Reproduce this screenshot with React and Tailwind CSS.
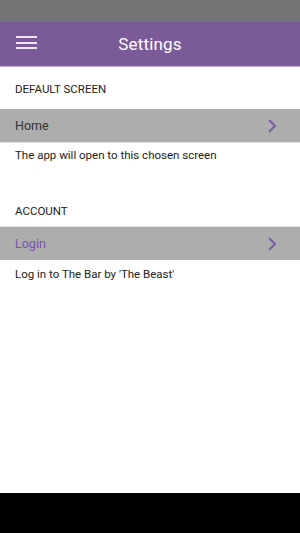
import React from 'react';

const Chevron = () => (
  <svg width="10" height="14" viewBox="0 0 10 14" className="shrink-0">
    <polyline points="2,1 8,7 2,13" fill="none" stroke="#7d5ba6" strokeWidth="2" />
  </svg>
);

const Row = ({ label, purple }) => (
  <div className="h-[33px] bg-[#adadad] flex items-center justify-between pl-[15px] pr-[23px]">
    <span className={`text-[12.5px] pt-[2px] ${purple ? 'text-[#7a4fb0]' : 'text-[#333]'}`}>{label}</span>
    <Chevron />
  </div>
);

export default function App() {
  return (
    <div
      className="w-[300px] h-[533px] flex flex-col bg-white overflow-hidden"
      style={{ fontFamily: 'Roboto, "Liberation Sans", sans-serif' }}
    >
      {/* status bar */}
      <div className="h-[22px] bg-[#757575] shrink-0"></div>

      {/* header */}
      <header className="h-[45px] bg-[#7b5a9a] border-b border-[#c1b0d3] flex items-center relative shrink-0">
        <div className="absolute left-[16px] top-[14px] flex flex-col gap-[3.5px]">
          <div className="w-[21px] h-[2px] bg-[#ece6f2]"></div>
          <div className="w-[21px] h-[2px] bg-[#ece6f2]"></div>
          <div className="w-[21px] h-[2px] bg-[#ece6f2]"></div>
        </div>
        <h1 className="w-full text-center text-[17px] text-white tracking-[0.2px] pt-[2px]">Settings</h1>
      </header>

      <main className="flex-1 flex flex-col">
        <div className="h-[42px] flex items-center pl-[15px] pt-[3px] text-[11.5px] text-[#222]">DEFAULT SCREEN</div>
        <div className="border-b border-[#e2e2e2]">
          <Row label="Home" />
        </div>
        <div className="h-[25px] flex items-center pl-[15px] pt-[1px] text-[11.5px] text-[#222]">
          The app will open to this chosen screen
        </div>

        <div className="h-[23px]"></div>
        <div className="h-[35px] flex items-center pl-[15px] pt-[6px] text-[11.5px] text-[#222]">ACCOUNT</div>
        <div className="border-t border-[#e2e2e2]">
          <Row label="Login" purple />
        </div>
        <div className="h-[28px] flex items-center pl-[15px] pt-[1px] text-[11.5px] text-[#222]">
          Log in to The Bar by 'The Beast'
        </div>
      </main>

      {/* nav bar */}
      <div className="h-[40px] bg-black shrink-0"></div>
    </div>
  );
}
